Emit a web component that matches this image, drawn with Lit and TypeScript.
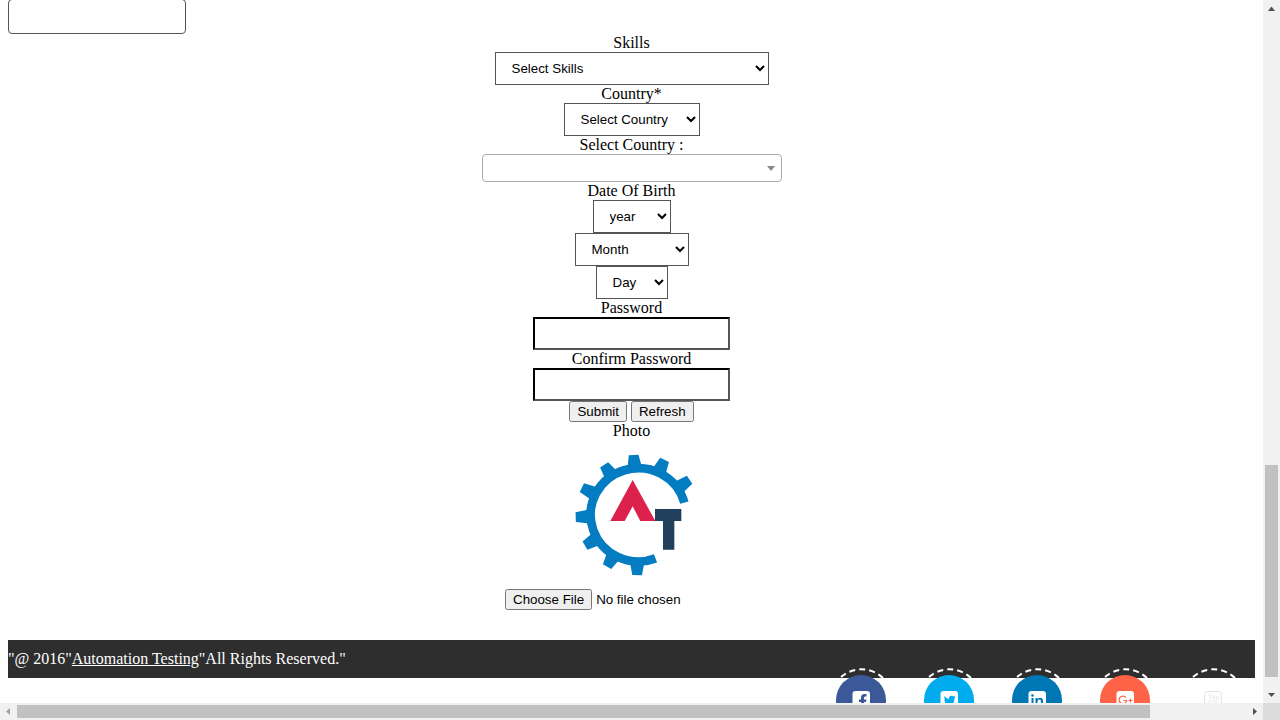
import { LitElement, html, css, svg } from "lit";
import { customElement, property } from "lit/decorators.js";
import { styleMap } from "lit/directives/style-map.js";

// Angle of each gear tooth and how far it reaches from the hub.
const TEETH = [
  [-4, 180], [26, 183], [56, 187], [-34, 181], [-64, 187], [-92, 187], [-120, 184], [-149, 181], [-179, 181],
];

@customElement("gear-logo")
class GearLogo extends LitElement {
  static styles = css`
    :host { display: block; }
    .logo { display: block; width: 150px; height: 149px; }
  `;
  render() {
    return html`<svg class="logo" viewBox="-10 0 450 447" role="img" aria-label="Photo">
      <path d="M285.500 355.100A143 140 0 1 1 372 188" fill="none" stroke="#037cc2" stroke-width="26" />
      ${TEETH.map(([a, r]) => svg`<path d="M212 78L218 ${224.5 - r}H247L254 78Z" fill="#037cc2" transform="rotate(${a} 233 224.5)"/>`)}
      <path d="M217 120L285 243H240L217 199L193 243H150Z" fill="#dc214c" />
      <path d="M284 207H363V243H342V329H308V243H284Z" fill="#21405b" />
    </svg>`;
  }
}

@customElement("scroll-bar")
class ScrollBar extends LitElement {
  @property({ type: Boolean, reflect: true }) horizontal = false;
  @property({ type: Number }) start = 0;
  @property({ type: Number }) size = 100;
  static styles = css`
    :host { display: flex; flex-direction: column; background: #f1f1f1; min-width: 0; min-height: 0; }
    :host([horizontal]) { flex-direction: row; }
    .arrow { flex: none; width: 17px; height: 17px; fill: #505050; }
    .off { fill: #a3a3a3; }
    .track { flex: 1; display: flex; flex-direction: column; min-width: 0; min-height: 0; padding: 0 2px; }
    :host([horizontal]) .track { flex-direction: row; padding: 2px 0; }
    .before { flex: none; }
    .thumb { flex: none; background: #c1c1c1; }
  `;
  render() {
    const h = this.horizontal;
    const len = (v: number) => (h ? { width: `${v}%` } : { height: `${v}%` });
    return html`
      <svg class="arrow ${h ? "off" : ""}" viewBox="0 0 17 17"><path d=${h ? "M10 5V12L6 8.5Z" : "M5 11H12L8.5 6.5Z"} /></svg>
      <div class="track">
        <div class="before" style=${styleMap(len(this.start))}></div>
        <div class="thumb" style=${styleMap(len(this.size))}></div>
      </div>
      <svg class="arrow" viewBox="0 0 17 17"><path d=${h ? "M7 5V12L11 8.5Z" : "M5 7H12L8.5 11Z"} /></svg>
    `;
  }
}

const SQUARE = svg`<rect x="23.500" y="23" width="17.500" height="18" rx="3" fill="#fff"/>`;
const SOCIAL = [
  { name: "Facebook", color: "#3b5998", glyph: svg`${SQUARE}<path d="M32 41V34H30V31.500H32V29.500Q32 26 35.500 26H37.500V28.500H36Q35 28.500 35 30V31.500H37.500L37 34H35V41Z" fill="#3b5998"/>` },
  { name: "Twitter", color: "#00aced", glyph: svg`${SQUARE}<path d="M27.500 28Q29.500 30.800 32 31Q31.700 27.800 34.500 27.800Q35.800 27.800 36.500 28.600L38.200 28L37.400 29.300L38.800 29L37.500 30.500Q37.300 37.500 31 37.800Q28.500 37.800 26.500 36.600Q28.600 36.600 29.800 35.700Q28 35.400 27.600 34H28.500Q27.300 33.300 27.100 31.500L28 31.800Q27 30 27.500 28Z" fill="#00aced"/>` },
  { name: "LinkedIn", color: "#0077b5", glyph: svg`${SQUARE}<path d="M26.500 30H28.500V38H26.500ZM30.500 30H32.500V31.200Q33.500 29.800 35.100 29.800Q38 29.800 38 33.500V38H36V34Q36 31.600 34.600 31.600Q32.500 31.600 32.500 34V38H30.500Z" fill="#0077b5"/><circle cx="27.500" cy="27.500" r="1.300" fill="#0077b5"/>` },
  { name: "Google+", color: "#ff6347", glyph: svg`${SQUARE}<path d="M33 29.600A3.800 3.800 0 1 0 33.700 32.500H30.300M35.500 32.500H39.500M37.500 30.500V34.500" fill="none" stroke="#ff6347" stroke-width="1.200"/>` },
  { name: "YouTube", color: "none", glyph: svg`<rect x="23.500" y="23.500" width="17" height="17" rx="3" fill="#fff" stroke="#e2e2e2"/><path d="M28 26L29.500 28.500L31 26M29.500 28.500V31M32 28H34V31H32ZM35.500 28V31H37.500V28M26.500 33H37.500M28 33V38M31 34.500V38H33V34.500M35 33V38H37V35H35" fill="none" stroke="#ececec" stroke-width="1"/>` },
];

@customElement("app-root")
class AppRoot extends LitElement {
  static styles = css`
    :host {
      display: grid; grid-template-columns: minmax(0, 1fr) 17px; grid-template-rows: minmax(0, 1fr) 17px;
      height: 100vh; overflow: hidden; background: #fff; color: #000;
      font: 16px/18px "Liberation Serif", "Times New Roman", serif;
    }
    .view { overflow: hidden; padding: 0 8px; }
    .corner { background: #dcdcdc; }
    .address {
      display: block; box-sizing: border-box; width: 178px; height: 35px; margin: -1px 0 0;
      border: 1px solid #555; border-radius: 4px; resize: none; background: #fff;
    }
    .form { display: flex; flex-direction: column; align-items: center; }
    select, input, button { font-family: "Liberation Sans", Arial, sans-serif; margin: 0; }
    .select { box-sizing: border-box; height: 33px; padding: 0 0 0 12px; border: 1px solid #555; border-radius: 0; background: #fff; color: #000; }
    .skills { width: 274px; }
    .country { width: 136px; }
    .year { width: 78px; }
    .month { width: 114px; }
    .day { width: 72px; }
    .combo { position: relative; width: 300px; height: 28px; }
    .combo-select { appearance: none; display: block; box-sizing: border-box; width: 100%; height: 100%; border: 1px solid #aaa; border-radius: 4px; background: #fff; }
    .combo-arrow { position: absolute; right: 7px; top: 12px; width: 8px; height: 5px; fill: #888; pointer-events: none; }
    .password { box-sizing: border-box; width: 197px; height: 33px; border: 2px solid; border-color: #000 #555 #555 #000; background: #fff; }
    .actions { display: flex; gap: 4px; height: 21px; }
    .file { height: 21px; }
    .footer { margin-top: 30px; padding: 10px 0; background: #2e2e2e; color: #fff; }
    .link { color: #fff; }
    .social { position: relative; display: flex; justify-content: flex-end; gap: 24px; margin: -10px 0 0; padding: 0 10px 0 0; list-style: none; }
    .social-link, .icon { display: block; width: 64px; height: 64px; }
  `;

  select(id: string, text: string) {
    return html`<select class="select ${id}" id=${id} aria-label=${text}><option>${text}</option></select>`;
  }

  render() {
    return html`
      <main class="view">
        <textarea class="address" aria-label="Address"></textarea>
        <form class="form" @submit=${(e: Event) => e.preventDefault()}>
          <label for="skills">Skills</label>
          ${this.select("skills", "Select Skills")}
          <label for="country">Country*</label>
          ${this.select("country", "Select Country")}
          <label for="combo">Select Country :</label>
          <div class="combo">
            <select class="combo-select" id="combo"><option></option></select>
            <svg class="combo-arrow" viewBox="0 0 8 5"><path d="M0 0H8L4 5Z" /></svg>
          </div>
          <label for="year">Date Of Birth</label>
          ${this.select("year", "year")}
          ${this.select("month", "Month")}
          ${this.select("day", "Day")}
          <label for="password">Password</label>
          <input class="password" id="password" type="password" />
          <label for="confirm">Confirm Password</label>
          <input class="password" id="confirm" type="password" />
          <div class="actions">
            <button type="submit">Submit</button>
            <button type="button">Refresh</button>
          </div>
          <label for="photo">Photo</label>
          <gear-logo></gear-logo>
          <input class="file" id="photo" type="file" />
        </form>
        <footer class="footer">"@ 2016"<a class="link" href="#">Automation Testing</a>"All Rights Reserved."</footer>
        <ul class="social">
          ${SOCIAL.map((s) => html`<li>
            <a class="social-link" href="#" aria-label=${s.name}>
              <svg class="icon" viewBox="0 0 64 64">
                <path d="M12 9A31 31 0 0 1 54 10" fill="none" stroke="#fff" stroke-width="2" stroke-dasharray="6 4" />
                <circle cx="32" cy="32" r="25" fill=${s.color} />
                ${s.glyph}
              </svg>
            </a>
          </li>`)}
        </ul>
      </main>
      <scroll-bar .start=${67} .size=${31.7}></scroll-bar>
      <scroll-bar horizontal .start=${0} .size=${92.2}></scroll-bar>
      <div class="corner"></div>
    `;
  }
}
